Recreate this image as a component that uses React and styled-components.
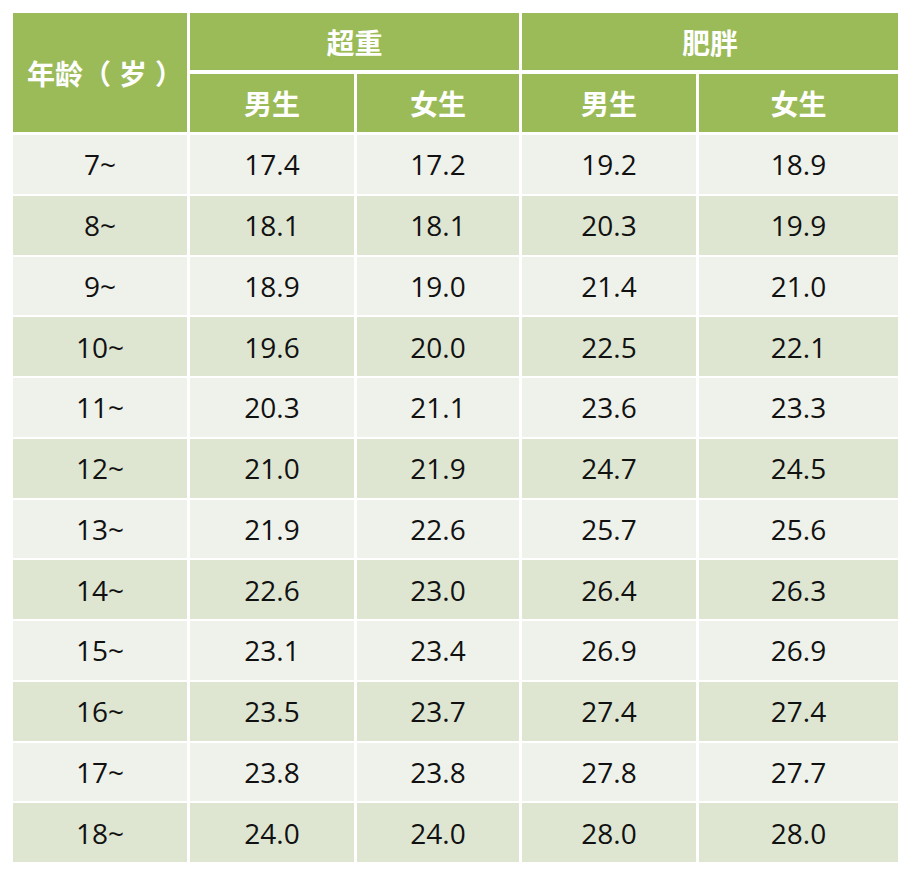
import React from "react";
import styled, { createGlobalStyle } from "styled-components";

const Global = createGlobalStyle`
  html, body { margin: 0; padding: 0; background: #ffffff; }
  body { font-family: "Open Sans", "Noto Sans CJK SC", sans-serif; }
`;

const COLS = "174px 164px 162px 174px 199px";

const Page = styled.div`
  padding: 13px 0 0 13px;
  width: 910px;
  height: 876px;
  box-sizing: border-box;
`;

const Table = styled.div`
  display: flex;
  flex-direction: column;
  gap: 3px;
  width: 885px;
`;

const Head = styled.div`
  display: grid;
  grid-template-columns: ${COLS};
  grid-template-rows: 57px 58px;
  column-gap: 3px;
  row-gap: 4px;
`;

const HeadCell = styled.div`
  background: #9bbb59;
  color: #ffffff;
  font-family: "Noto Sans CJK SC", sans-serif;
  font-weight: 700;
  font-size: 28px;
  display: flex;
  align-items: center;
  justify-content: ${(p) => (p.$start ? "flex-start" : "center")};
  padding-left: ${(p) => (p.$start ? "14px" : "0")};
  grid-column: ${(p) => p.$col || "auto"};
  grid-row: ${(p) => p.$row || "auto"};
`;

const Paren = styled.span`
  margin-right: ${(p) => (p.$close ? "0" : "8px")};
  margin-left: ${(p) => (p.$close ? "8px" : "0")};
`;

const Body = styled.div`
  display: grid;
  grid-template-columns: ${COLS};
  grid-auto-rows: 58.75px;
  column-gap: 3px;
  row-gap: 2px;
`;

const Cell = styled.div`
  background: ${(p) => (p.$alt ? "#dee6d2" : "#eff2ea")};
  color: #111111;
  font-family: "Open Sans", "Noto Sans CJK SC", sans-serif;
  font-size: 28px;
  display: flex;
  align-items: center;
  justify-content: center;
`;

const rows = [
  ["7~", "17.4", "17.2", "19.2", "18.9"],
  ["8~", "18.1", "18.1", "20.3", "19.9"],
  ["9~", "18.9", "19.0", "21.4", "21.0"],
  ["10~", "19.6", "20.0", "22.5", "22.1"],
  ["11~", "20.3", "21.1", "23.6", "23.3"],
  ["12~", "21.0", "21.9", "24.7", "24.5"],
  ["13~", "21.9", "22.6", "25.7", "25.6"],
  ["14~", "22.6", "23.0", "26.4", "26.3"],
  ["15~", "23.1", "23.4", "26.9", "26.9"],
  ["16~", "23.5", "23.7", "27.4", "27.4"],
  ["17~", "23.8", "23.8", "27.8", "27.7"],
  ["18~", "24.0", "24.0", "28.0", "28.0"],
];

export default function App() {
  return (
    <Page>
      <Global />
      <Table>
        <Head>
          <HeadCell $col="1" $row="1 / span 2" $start>
            年龄<Paren>（</Paren>岁<Paren $close>）</Paren>
          </HeadCell>
          <HeadCell $col="2 / span 2" $row="1">超重</HeadCell>
          <HeadCell $col="4 / span 2" $row="1">肥胖</HeadCell>
          <HeadCell $col="2" $row="2">男生</HeadCell>
          <HeadCell $col="3" $row="2">女生</HeadCell>
          <HeadCell $col="4" $row="2">男生</HeadCell>
          <HeadCell $col="5" $row="2">女生</HeadCell>
        </Head>
        <Body>
          {rows.map((r, i) =>
            r.map((v, j) => (
              <Cell key={`${i}-${j}`} $alt={i % 2 === 1}>
                {v}
              </Cell>
            ))
          )}
        </Body>
      </Table>
    </Page>
  );
}
